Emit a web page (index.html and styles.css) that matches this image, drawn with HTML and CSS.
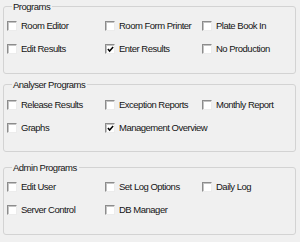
FILE: index.html
```html
<!DOCTYPE html>
<html lang="en">
  <head>
    <meta charset="UTF-8" />
    <title>Programs</title>
    <link rel="stylesheet" href="styles.css">
  </head>
  <body>
    <fieldset class="gruppe">
      <legend>Programs</legend>
      <div class="valg">
        <label><span class="boks"></span>Room Editor</label>
        <label><span class="boks"></span>Room Form Printer</label>
        <label><span class="boks"></span>Plate Book In</label>
        <label><span class="boks"></span>Edit Results</label>
        <label><span class="boks"><svg viewBox="0 0 8 8"><path d="M1 3.5 L3 5.8 L7 1.2" /></svg></span>Enter Results</label>
        <label><span class="boks"></span>No Production</label>
      </div>
    </fieldset>

    <fieldset class="gruppe midt">
      <legend>Analyser Programs</legend>
      <div class="valg">
        <label><span class="boks"></span>Release Results</label>
        <label><span class="boks"></span>Exception Reports</label>
        <label><span class="boks"></span>Monthly Report</label>
        <label><span class="boks"></span>Graphs</label>
        <label><span class="boks"><svg viewBox="0 0 8 8"><path d="M1 3.5 L3 5.8 L7 1.2" /></svg></span>Management Overview</label>
      </div>
    </fieldset>

    <fieldset class="gruppe sidste">
      <legend>Admin Programs</legend>
      <div class="valg">
        <label><span class="boks"></span>Edit User</label>
        <label><span class="boks"></span>Set Log Options</label>
        <label><span class="boks"></span>Daily Log</label>
        <label><span class="boks"></span>Server Control</label>
        <label><span class="boks"></span>DB Manager</label>
      </div>
    </fieldset>
  </body>
</html>
```

FILE: styles.css
```css
* {
  box-sizing: border-box;
}
body {
  margin: 0;
  padding-top: 1px;
  width: 300px;
  height: 242px;
  background-color: #f0f0f0;
  font-family: "Liberation Sans", Arial, sans-serif;
  font-size: 9.5px;
  letter-spacing: -0.5px;
  color: #151515;
  overflow: hidden;
}
.gruppe {
  margin: 0 4px 0 3px;
  padding: 2px 0 12px 3px;
  border: 1px solid #d3d3d3;
  border-radius: 3px;
  min-inline-size: 0;
  height: 73px;
}
.gruppe.midt {
  margin-top: 5px;
  padding-top: 3px;
}
.gruppe.sidste {
  margin-top: 10px;
}
legend {
  margin-left: 5px;
  padding: 0 2px 0 1px;
  line-height: 11px;
  height: 11px;
}
.valg {
  display: grid;
  grid-template-columns: 98px 97px 1fr;
  grid-auto-rows: 23px;
}
label {
  display: flex;
  align-items: center;
  gap: 4px;
  white-space: nowrap;
}
.boks {
  display: flex;
  align-items: center;
  justify-content: center;
  width: 10px;
  height: 10px;
  flex: none;
  background-color: #fff;
  border-top: 1px solid #8c8c8c;
  border-left: 1px solid #8c8c8c;
  border-right: 1px solid #ececec;
  border-bottom: 1px solid #ececec;
  box-shadow: inset 1px 1px 0 #c4c4c4;
}
.boks svg {
  width: 7px;
  height: 7px;
  margin: 1px 0 0 1px;
}
.boks path {
  fill: none;
  stroke: #000;
  stroke-width: 1.7;
}
```
